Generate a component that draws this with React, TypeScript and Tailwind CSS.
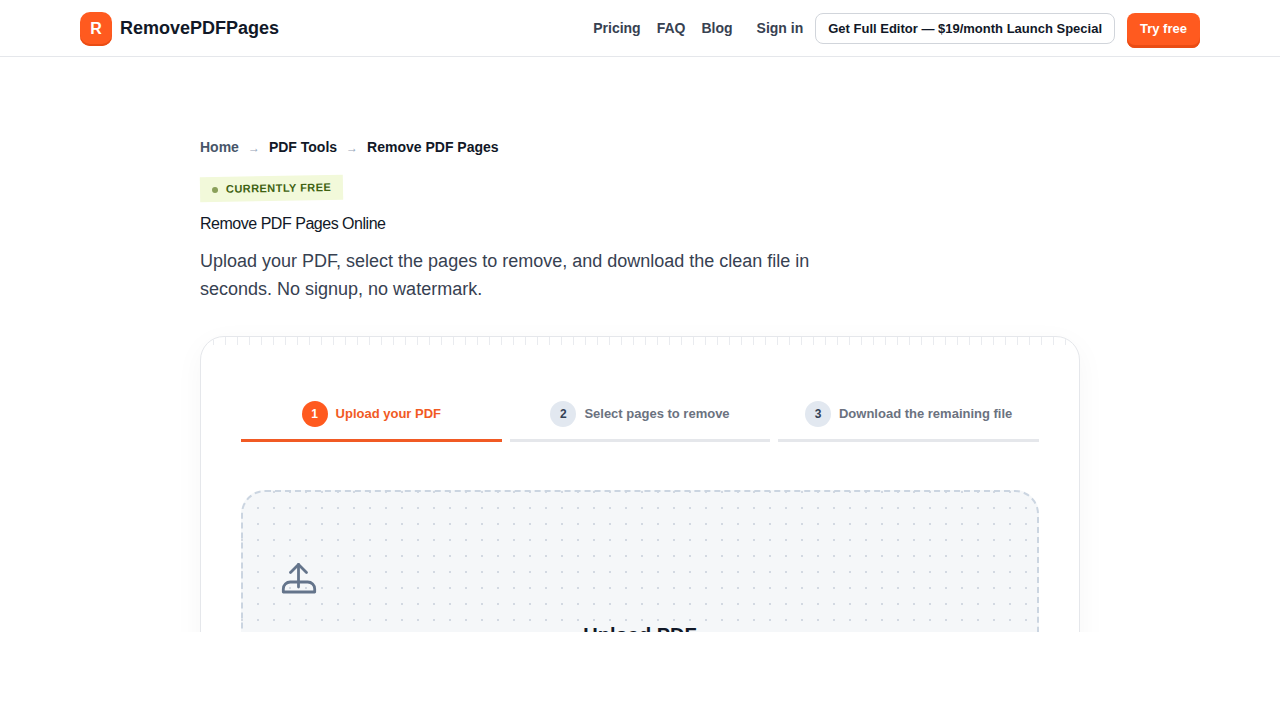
const font = "font-['Liberation_Sans',Arial,sans-serif]";

const steps = [
  { n: 1, label: "Upload your PDF", active: true },
  { n: 2, label: "Select pages to remove", active: false },
  { n: 3, label: "Download the remaining file", active: false },
];

function UploadIcon() {
  return (
    <svg width="38" height="34" viewBox="0 0 38 34" fill="none" stroke="#64748b" strokeWidth="2.8" strokeLinejoin="round" strokeLinecap="round">
      <path d="M18.5 25V2.5" />
      <path d="M10.5 10.5 18.5 2.5 26.5 10.5" />
      <path d="M3.3 30v-3a7 7 0 0 1 7-7h17.4a7 7 0 0 1 7 7v3Z" />
    </svg>
  );
}

export default function App() {
  return (
    <div className={`${font} h-[632px] overflow-hidden bg-white text-[#111827]`}>
      <header className="h-[57px] border-b border-[#e5e7eb] px-20 flex items-center justify-between">
        <div className="flex items-center gap-2">
          <div className="mt-[2px] w-8 h-[34px] rounded-[10px] bg-[#ff5a1f] shadow-[inset_0_-2px_0_#ea4c14] text-white font-bold text-base flex items-center justify-center">R</div>
          <span className="text-lg font-bold text-[#111827]">RemovePDFPages</span>
        </div>
        <nav className="flex items-center text-sm font-semibold text-[#374151]">
          <a className="mr-4">Pricing</a>
          <a className="mr-4">FAQ</a>
          <a className="mr-6">Blog</a>
          <a className="mr-3">Sign in</a>
          <button className="h-[31px] px-3 pt-[2px] mr-3 rounded-lg border border-[#d1d5db] bg-white text-[13px] font-bold text-[#111827]">Get Full Editor — $19/month Launch Special</button>
          <button className="mt-1 h-[35px] w-[73px] pb-[1px] rounded-lg bg-[#ff5a1f] shadow-[inset_0_-3px_0_#ea4c14] text-[13px] font-bold text-white">Try free</button>
        </nav>
      </header>

      <main className="w-[880px] mx-auto pt-[80px]">
        <div className="flex items-center text-sm font-semibold h-5">
          <span className="text-[#475569]">Home</span>
          <span className="mx-[9px] pt-[2px] text-xs font-normal text-[#94a3b8]">→</span>
          <span>PDF Tools</span>
          <span className="mx-[9px] pt-[2px] text-xs font-normal text-[#94a3b8]">→</span>
          <span>Remove PDF Pages</span>
        </div>

        <div className="mt-[19px] w-[143px] h-[25px] -rotate-1 bg-[#f2f9da] flex items-center pl-[12px] gap-[8px] text-[11px] font-bold tracking-[0.04em] text-[#3f6212]">
          <span className="w-[6px] h-[6px] rounded-full bg-[#8aa05a]"></span>
          CURRENTLY FREE
        </div>

        <h1 className="mt-[11px] text-base font-normal tracking-[-0.03em] leading-6">Remove PDF Pages Online</h1>
        <p className="mt-[11px] w-[640px] text-lg leading-7 text-[#374151]">Upload your PDF, select the pages to remove, and download the clean file in seconds. No signup, no watermark.</p>

        <section className="relative mt-[33px] rounded-3xl border border-[#e5e7eb] bg-white px-10 pt-[52px] shadow-[0_8px_30px_rgba(15,23,42,0.04)] overflow-hidden">
          <div className="absolute inset-x-0 top-0 h-2 bg-[repeating-linear-gradient(90deg,#e9ebef_0,#e9ebef_1px,transparent_1px,transparent_12px)]"></div>
          <div className="grid grid-cols-3 gap-2">
            {steps.map((s) => (
              <div key={s.n} className={`h-[53px] pb-[1px] flex items-center justify-center gap-2 border-b-[3px] text-[13px] font-bold ${s.active ? "border-[#f15a24] text-[#f15a24]" : "border-[#e5e7eb] text-[#6b7280]"}`}>
                <span className={`w-[26px] h-[26px] rounded-full flex items-center justify-center text-xs ${s.active ? "bg-[#ff5a1f] text-white" : "bg-[#e2e8f0] text-[#334155]"}`}>{s.n}</span>
                {s.label}
              </div>
            ))}
          </div>

          <div className="mt-12 h-[300px] rounded-3xl border-2 border-dashed border-[#cbd5e1] bg-[#f5f7f9] bg-[radial-gradient(circle,#d3d9e2_1px,transparent_1.2px)] bg-[length:16px_16px] bg-[position:7px_8px] pl-[37px] pr-10 pt-[70px]">
            <UploadIcon />
            <h2 className="-ml-[37px] -mr-10 mt-[25px] text-center text-xl leading-7 font-bold text-[#111827]">Upload PDF</h2>
          </div>
        </section>
      </main>
    </div>
  );
}
